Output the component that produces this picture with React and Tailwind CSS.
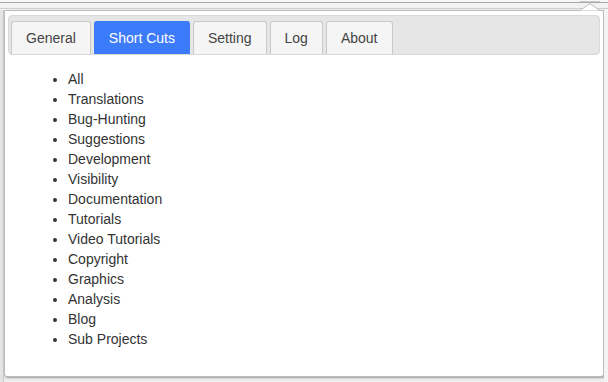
import React from "react";

const tabs = ["General", "Short Cuts", "Setting", "Log", "About"];

const items = [
  "All",
  "Translations",
  "Bug-Hunting",
  "Suggestions",
  "Development",
  "Visibility",
  "Documentation",
  "Tutorials",
  "Video Tutorials",
  "Copyright",
  "Graphics",
  "Analysis",
  "Blog",
  "Sub Projects",
];

const App = () => {
  const active = "Short Cuts";

  return (
    <div className="relative w-[608px] h-[382px] overflow-hidden bg-[#eeeeee] font-['Liberation_Sans',Arial,sans-serif]">
      {/* browser chrome behind the popup */}
      <div className="h-[2px] bg-[#f6f6f6]" />
      <div className="h-[1px] bg-[#a9a9a9]" />
      <div className="h-[5px] bg-[#f2f2f2]" />
      <div className="h-[1px] bg-[#cfcfcf]" />
      <div className="h-[1px] bg-[#f2f2f2]" />

      {/* popup arrow */}
      <svg className="absolute left-[580px] top-[1px]" width="20" height="10" viewBox="0 0 20 10">
        <rect x="0" y="0" width="20" height="1" fill="#c8c8c8" />
        <path d="M0 9.5 L10 2.5 L20 9.5" fill="#ffffff" stroke="#bdbdbd" strokeWidth="1" />
      </svg>

      <div className="flex">
        <div className="w-[4px] h-[372px] bg-[#e4e4e4] border-r border-[#c9c9c9]" />

        <div className="w-[600px] h-[367px] bg-white border border-[#bcbcbc] rounded-b-[3px] shadow-[1px_1px_2px_rgba(0,0,0,0.35)]">
          <div className="mx-[3px] mt-[4px] flex gap-[3px] h-[40px] pl-[2px] pt-[5px] bg-[#e6e6e6] border border-[#d9d9d9] rounded-[4px]">
            {tabs.map((t) => {
              const isActive = t === active;
              return (
                <div
                  key={t}
                  className={`h-[33px] px-[14px] flex items-center text-[14px] rounded-t-[3px] border border-b-0 ${
                    isActive
                      ? "bg-[#3c7cfb] border-[#3c7cfb] text-white"
                      : "bg-[#f5f5f5] border-[#c9c9c9] text-[#444444]"
                  }`}
                >
                  {t}
                </div>
              );
            })}
          </div>

          <ul className="mt-[14px] ml-[23px] pl-[40px] list-disc text-[14px] leading-[20px] text-[#333333] marker:text-[#333333]">
            {items.map((i) => (
              <li key={i}>{i}</li>
            ))}
          </ul>
        </div>

        <div className="flex-1 h-[372px] bg-[#f4f4f4]" />
      </div>
    </div>
  );
};

export default App;
